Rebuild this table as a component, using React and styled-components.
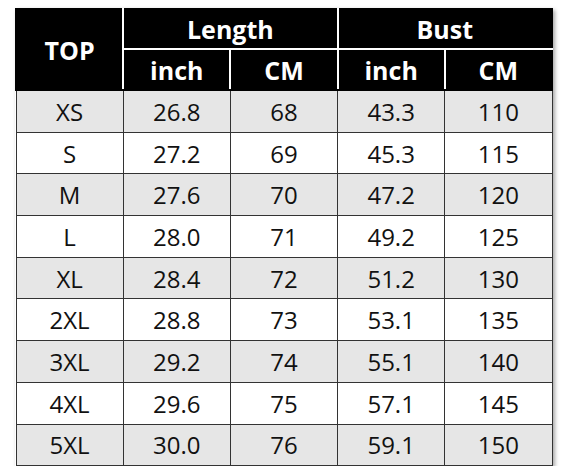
import React from "react";
import styled, { createGlobalStyle } from "styled-components";

const GlobalStyle = createGlobalStyle`
  body {
    margin: 0;
    background: #ffffff;
    font-family: "Open Sans", "Noto Sans", sans-serif;
  }
`;

const Page = styled.div`
  padding: 8px 0 0 15px;
`;

const Table = styled.table`
  width: 538px;
  table-layout: fixed;
  border-collapse: collapse;
  box-shadow: 2px 2px 4px rgba(0, 0, 0, 0.35);
  text-align: center;
`;

const HeadCell = styled.th`
  background: #000;
  color: #fff;
  font-weight: 700;
  font-size: 25px;
  height: ${(p) => p.$h}px;
  padding: 0;
  border: 2px solid #fff;
  border-top-color: #000;
  border-left-color: ${(p) => (p.$first ? "#000" : "#fff")};
  border-right-color: ${(p) => (p.$last ? "#000" : "#fff")};
  border-bottom-color: ${(p) => (p.$bottom ? "#000" : "#fff")};
`;

const Row = styled.tr`
  background: ${(p) => (p.$shade ? "#e6e6e6" : "#ffffff")};
`;

const Cell = styled.td`
  height: 40.7px;
  padding: 0;
  font-size: 24px;
  color: #111;
  border: 1.5px solid #333;
`;

const rows = [
  ["XS", "26.8", "68", "43.3", "110"],
  ["S", "27.2", "69", "45.3", "115"],
  ["M", "27.6", "70", "47.2", "120"],
  ["L", "28.0", "71", "49.2", "125"],
  ["XL", "28.4", "72", "51.2", "130"],
  ["2XL", "28.8", "73", "53.1", "135"],
  ["3XL", "29.2", "74", "55.1", "140"],
  ["4XL", "29.6", "75", "57.1", "145"],
  ["5XL", "30.0", "76", "59.1", "150"],
];

export default function App() {
  return (
    <Page>
      <GlobalStyle />
      <Table>
        <thead>
          <tr>
            <HeadCell rowSpan={2} $h={40} $first $bottom>
              TOP
            </HeadCell>
            <HeadCell colSpan={2} $h={38}>
              Length
            </HeadCell>
            <HeadCell colSpan={2} $h={38} $last>
              Bust
            </HeadCell>
          </tr>
          <tr>
            <HeadCell $h={39} $bottom>inch</HeadCell>
            <HeadCell $h={39} $bottom>CM</HeadCell>
            <HeadCell $h={39} $bottom>inch</HeadCell>
            <HeadCell $h={39} $bottom $last>CM</HeadCell>
          </tr>
        </thead>
        <tbody>
          {rows.map((r, i) => (
            <Row key={r[0]} $shade={i % 2 === 0}>
              {r.map((v, j) => (
                <Cell key={j}>{v}</Cell>
              ))}
            </Row>
          ))}
        </tbody>
      </Table>
    </Page>
  );
}
